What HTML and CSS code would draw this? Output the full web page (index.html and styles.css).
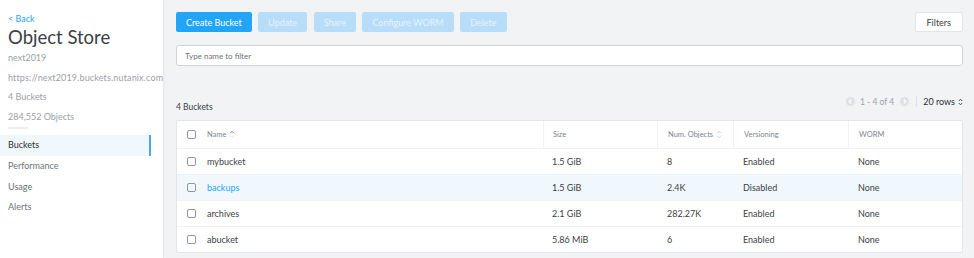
FILE: index.html
```html
<!DOCTYPE html>
<html lang="en">
<head>
    <meta charset="UTF-8">
    <title>Object Store - Buckets</title>
    <link rel="stylesheet" href="styles.css">
</head>
<body>
    <div class="layout">
        <!-- Left sidebar -->
        <aside class="sidebar">
            <a href="#" class="back-link">&lt; Back</a>
            <h1 class="store-title">Object Store</h1>
            <div class="meta">next2019</div>
            <div class="meta url">https://next2019.buckets.nutanix.com</div>
            <div class="meta">4 Buckets</div>
            <div class="meta">284,552 Objects</div>
            <div class="meta-divider"></div>
            <nav class="side-nav">
                <a href="#" class="active">Buckets</a>
                <a href="#">Performance</a>
                <a href="#">Usage</a>
                <a href="#">Alerts</a>
            </nav>
        </aside>

        <!-- Main content -->
        <main class="main">
            <div class="toolbar">
                <div class="actions">
                    <button class="btn primary">Create Bucket</button>
                    <button class="btn disabled">Update</button>
                    <button class="btn disabled">Share</button>
                    <button class="btn disabled">Configure WORM</button>
                    <button class="btn disabled">Delete</button>
                </div>
                <button class="btn filters">Filters</button>
            </div>

            <input type="text" class="filter-input" placeholder="Type name to filter">

            <div class="table-head">
                <span class="count">4 Buckets</span>
                <div class="pager">
                    <svg class="pager-arrow" width="9" height="9" viewBox="0 0 10 10">
                        <circle cx="5" cy="5" r="5" fill="#dfe2e5"/>
                        <path d="M5.8 2.8 L3.6 5 L5.8 7.2" fill="none" stroke="#fff" stroke-width="1.3"/>
                    </svg>
                    <span class="pager-range">1 - 4 of 4</span>
                    <svg class="pager-arrow" width="9" height="9" viewBox="0 0 10 10">
                        <circle cx="5" cy="5" r="5" fill="#dfe2e5"/>
                        <path d="M4.2 2.8 L6.4 5 L4.2 7.2" fill="none" stroke="#fff" stroke-width="1.3"/>
                    </svg>
                    <span class="pager-sep"></span>
                    <span class="pager-rows">20 rows</span>
                    <svg class="rows-caret" width="5" height="8" viewBox="0 0 5 8">
                        <path d="M0.8 3 L2.5 1.2 L4.2 3 M0.8 5 L2.5 6.8 L4.2 5" fill="none" stroke="#4a5058" stroke-width="1"/>
                    </svg>
                </div>
            </div>

            <div class="table">
                <div class="row header">
                    <div class="cell check"><span class="checkbox"></span></div>
                    <div class="cell name">Name
                        <svg class="sort" width="6" height="9" viewBox="0 0 6 9">
                            <path d="M1 3.3 L3 1.3 L5 3.3" fill="none" stroke="#6b737b" stroke-width="0.9"/>
                            <path d="M1 5.7 L3 7.7 L5 5.7" fill="none" stroke="#d5d9dd" stroke-width="0.9"/>
                        </svg>
                    </div>
                    <div class="cell size">Size</div>
                    <div class="cell objects">Num. Objects
                        <svg class="sort" width="6" height="9" viewBox="0 0 6 9">
                            <path d="M1 3.3 L3 1.3 L5 3.3" fill="none" stroke="#c7ccd1" stroke-width="0.9"/>
                            <path d="M1 5.7 L3 7.7 L5 5.7" fill="none" stroke="#c7ccd1" stroke-width="0.9"/>
                        </svg>
                    </div>
                    <div class="cell versioning">Versioning</div>
                    <div class="cell worm">WORM</div>
                </div>
                <div class="row">
                    <div class="cell check"><span class="checkbox"></span></div>
                    <div class="cell name">mybucket</div>
                    <div class="cell size">1.5 GiB</div>
                    <div class="cell objects">8</div>
                    <div class="cell versioning">Enabled</div>
                    <div class="cell worm">None</div>
                </div>
                <div class="row hover">
                    <div class="cell check"><span class="checkbox"></span></div>
                    <div class="cell name"><a href="#">backups</a></div>
                    <div class="cell size">1.5 GiB</div>
                    <div class="cell objects">2.4K</div>
                    <div class="cell versioning">Disabled</div>
                    <div class="cell worm">None</div>
                </div>
                <div class="row">
                    <div class="cell check"><span class="checkbox"></span></div>
                    <div class="cell name">archives</div>
                    <div class="cell size">2.1 GiB</div>
                    <div class="cell objects">282.27K</div>
                    <div class="cell versioning">Enabled</div>
                    <div class="cell worm">None</div>
                </div>
                <div class="row">
                    <div class="cell check"><span class="checkbox"></span></div>
                    <div class="cell name">abucket</div>
                    <div class="cell size">5.86 MiB</div>
                    <div class="cell objects">6</div>
                    <div class="cell versioning">Enabled</div>
                    <div class="cell worm">None</div>
                </div>
            </div>
        </main>
    </div>
</body>
</html>
```

FILE: styles.css
```css
body {
    margin: 0;
    font-family: Lato, "Open Sans", sans-serif;
    background-color: #f2f3f5;
    color: #333;
}

.layout {
    display: flex;
    height: 258px;
    overflow: hidden;
}

/* Sidebar */
.sidebar {
    width: 163px;
    flex-shrink: 0;
    background: #fff;
    box-shadow: 1px 0 2px rgba(0, 0, 0, 0.06);
    padding-top: 13px;
    overflow: hidden;
}

.back-link {
    display: block;
    margin-left: 8px;
    font-size: 9px;
    line-height: 12px;
    color: #22a5f7;
    text-decoration: none;
}

.store-title {
    margin: 1px 0 0 8px;
    font-size: 18.5px;
    font-weight: 400;
    line-height: 23px;
    color: #3b3f45;
    white-space: nowrap;
}

.meta {
    margin-left: 8px;
    font-size: 9px;
    line-height: 19.6px;
    color: #9aa1a8;
    white-space: nowrap;
    overflow: hidden;
}

.meta:nth-of-type(1) {
    margin-top: -1px;
}

.meta.url {
    letter-spacing: 0.15px;
}

.meta-divider {
    width: 20px;
    height: 2px;
    margin: 1px 0 0 8px;
    background: #eceef0;
}

.side-nav {
    margin-top: 6px;
}

.side-nav a {
    display: block;
    width: 141px;
    padding-left: 8px;
    font-size: 9px;
    line-height: 20.7px;
    color: #6b737b;
    text-decoration: none;
}

.side-nav a.active {
    background: #f0f8fe;
    color: #2c3035;
    border-right: 2px solid #4aa8f0;
}

/* Main */
.main {
    flex: 1;
    padding: 12px 11px 0 13px;
    min-width: 0;
}

.toolbar {
    display: flex;
    justify-content: space-between;
}

.actions {
    display: flex;
    gap: 6.5px;
}

.btn {
    height: 20px;
    padding: 0 10px;
    font-family: inherit;
    font-size: 9px;
    border: none;
    border-radius: 2px;
    cursor: pointer;
}

.btn.primary {
    background: #22a5f7;
    color: #fff;
}

.btn.disabled {
    background: #b8ddf8;
    color: #e4f3fd;
}

.btn.filters {
    background: #fff;
    color: #3b3f45;
    border: 1px solid #e3e6e9;
    padding: 0 11px;
}

.filter-input {
    display: block;
    box-sizing: border-box;
    width: 100%;
    height: 21px;
    margin-top: 13px;
    padding: 0 8px;
    font-family: inherit;
    font-size: 8px;
    border: 1px solid #cfd5db;
    border-radius: 3px;
    background: #fff;
    outline: none;
}

.filter-input::placeholder {
    color: #6b737b;
}

.table-head {
    display: flex;
    justify-content: space-between;
    align-items: center;
    margin-top: 31px;
    height: 14px;
}

.count {
    font-size: 8.5px;
    color: #3b3f45;
    margin-top: 6px;
}

.pager {
    display: flex;
    align-items: center;
    font-size: 8.5px;
    color: #9aa1a8;
    margin-top: -5px;
}

.pager-range {
    margin: 0 6px 0 5px;
}

.pager-sep {
    width: 1px;
    height: 11px;
    background: #dfe2e5;
    margin: 0 6px 0 7px;
}

.pager-rows {
    color: #2c3035;
    font-size: 9px;
}

.rows-caret {
    margin-left: 3px;
}

/* Table */
.table {
    margin-top: 9px;
    background: #fff;
    border: 1px solid #e3e6e9;
    border-radius: 2px;
}

.row {
    display: flex;
    box-sizing: border-box;
    height: 26px;
    align-items: center;
    border-top: 1px solid #f1f2f4;
    font-size: 9px;
    color: #3b3f45;
}

.row.header {
    height: 27px;
    border-top: none;
    font-size: 7.5px;
    color: #7d858d;
}

.row.hover {
    background: #f0f8fe;
}

.cell {
    box-sizing: border-box;
    height: 100%;
    display: flex;
    align-items: center;
    white-space: nowrap;
}

.row.header .cell.size,
.row.header .cell.objects,
.row.header .cell.versioning,
.row.header .cell.worm {
    border-left: 1px solid #f1f2f4;
}

.check {
    width: 30px;
    padding-left: 10px;
}

.checkbox {
    width: 7px;
    height: 7px;
    border: 1px solid #8f969d;
    border-radius: 2px;
}

.name {
    width: 336px;
}

.name a {
    color: #22a5f7;
    text-decoration: none;
}

.size {
    width: 114px;
    padding-left: 9px;
}

.objects {
    width: 76px;
    padding-left: 10px;
}

.versioning {
    width: 115px;
    padding-left: 10px;
}

.worm {
    flex: 1;
    padding-left: 10px;
}

.sort {
    margin-left: 3px;
}
```
